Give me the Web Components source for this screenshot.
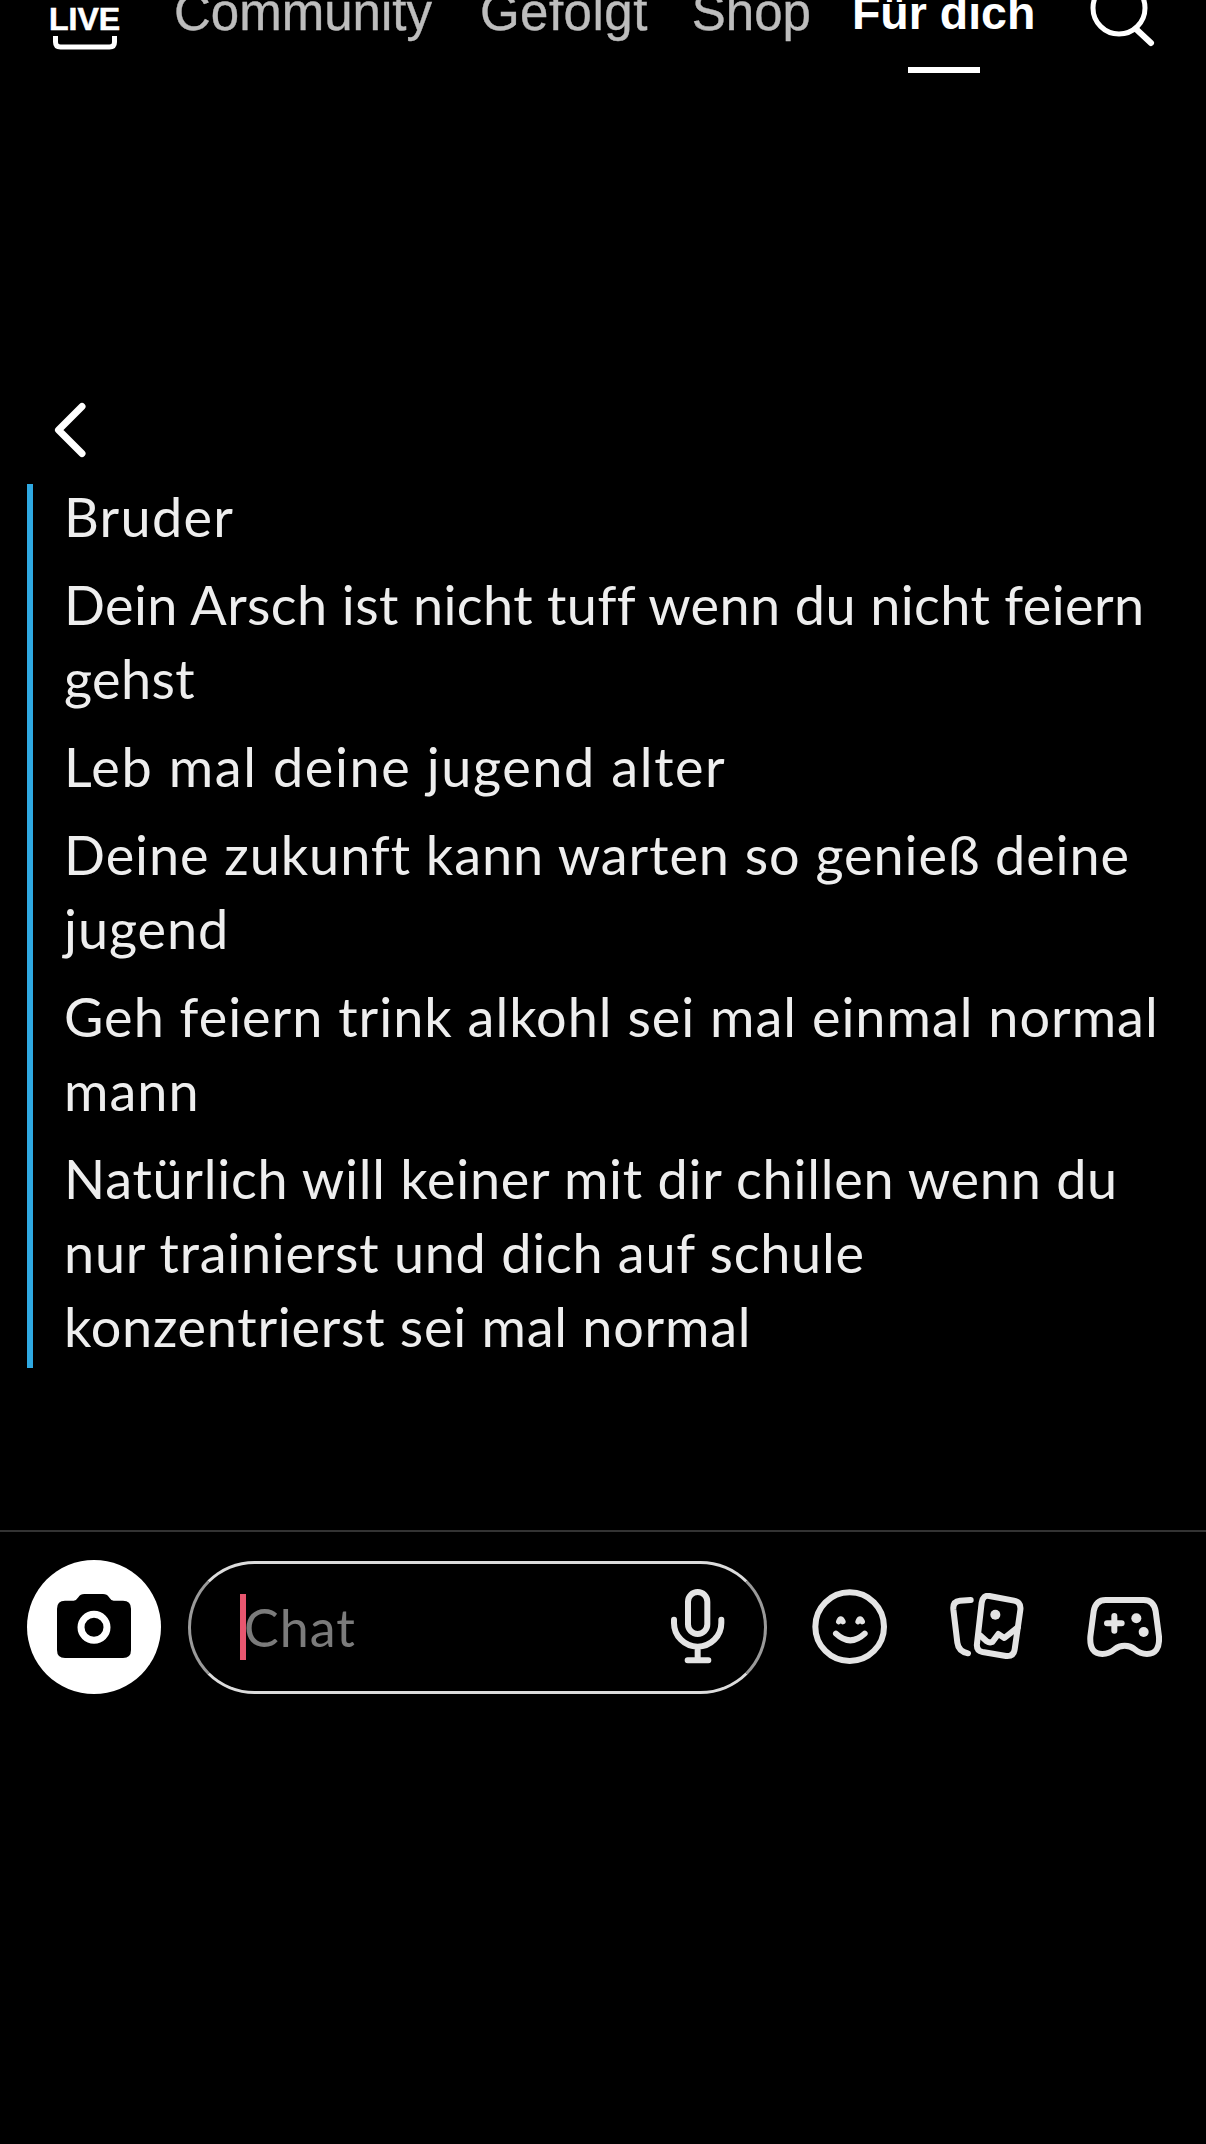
<!DOCTYPE html>
<html lang="de"><head><meta charset="utf-8"><title>Chat</title>
<style>
html,body{margin:0;padding:0;background:#000;height:2144px;overflow:hidden}
body{display:flex;flex-direction:column;font-family:"Liberation Sans",sans-serif;color:#fff}
</style></head><body>
<top-nav></top-nav>
<back-link></back-link>
<quote-block>
<p style="letter-spacing:1.300px">Bruder</p>
<p style="letter-spacing:.400px">Dein Arsch ist nicht tuff wenn du nicht feiern gehst</p>
<p>Leb mal deine jugend alter</p>
<p style="letter-spacing:.950px">Deine zukunft kann warten so genieß deine jugend</p>
<p style="letter-spacing:1px">Geh feiern trink alkohl sei mal einmal normal mann</p>
<p style="letter-spacing:.750px">Natürlich will keiner mit dir chillen wenn du nur trainierst und dich auf schule konzentrierst sei mal normal</p>
</quote-block>
<chat-composer></chat-composer>
<script>
function def(name,html){customElements.define(name,class extends HTMLElement{constructor(){super();this.attachShadow({mode:"open"}).innerHTML=html}})}
customElements.define("nav-tab",class extends HTMLElement{constructor(){super();this.attachShadow({mode:"open"}).innerHTML=`<style>
:host{display:flex;flex-direction:column;align-items:center;font:400 51px/58px "Liberation Sans",sans-serif;color:#bdbdbd;white-space:nowrap;flex:none;-webkit-text-stroke:.4px #bdbdbd}
:host([active]){font-weight:700;font-size:46.500px;color:#fff;-webkit-text-stroke:0}
i{display:none;width:72px;height:6px;background:#fff;margin-top:25px}
:host([active]) i{display:block}
</style><slot></slot><i></i>`}});
def("top-nav",`<style>
:host{display:flex;align-items:flex-start;margin-top:-16px;padding-left:49px;height:89px;flex:none}
.live{width:71px;margin-right:54px;display:flex;flex-direction:column;align-items:center;flex:none}
.live b{font:700 32px/31px "Liberation Sans",sans-serif;color:#fff;margin-top:20px;white-space:nowrap;-webkit-text-stroke:.6px #fff}
.live svg{display:block;margin-top:1px;flex:none}
nav-tab.c{margin-right:48px}nav-tab.g{margin-right:44px;letter-spacing:.5px}nav-tab.s{margin-right:41px}nav-tab.f{margin-right:55px}
.search{display:block;flex:none}
</style>
<div class="live"><b>LIVE</b><svg width="64" height="14" viewBox="0 0 64 14"><path d="M2.500 0v6q0 5 5 5h49q5 0 5-5V0" fill="none" stroke="#fff" stroke-width="5"/></svg></div>
<nav-tab class="c">Community</nav-tab><nav-tab class="g">Gefolgt</nav-tab><nav-tab class="s">Shop</nav-tab><nav-tab class="f" active>Für dich</nav-tab>
<svg class="search" width="66" height="64" viewBox="0 0 66 64"><circle cx="29" cy="24" r="26" fill="none" stroke="#fff" stroke-width="5"/><path d="M46 45l15 14" stroke="#fff" stroke-width="6" stroke-linecap="round" fill="none"/></svg>`);
def("back-link",`<style>:host{display:block;margin:326px 0 0 50px;height:85px;flex:none}svg{display:block}</style>
<svg width="40" height="62" viewBox="0 0 40 62"><path d="M32 7.500L8.500 31 32 54.500" fill="none" stroke="#fff" stroke-width="7" stroke-linecap="round" stroke-linejoin="round"/></svg>`);
def("quote-block",`<style>
:host{display:block;flex:none;margin:0 0 0 27px;width:1150px;box-sizing:border-box;padding:0 0 0 31px;border-left:6px solid #2fa9e2;font:400 54px/74px Lato,sans-serif;letter-spacing:1.600px;color:#eee;height:884px}
::slotted(p){margin:0 0 14px}
::slotted(p:first-child){margin-top:-4px}
</style><slot></slot>`);
def("chat-composer",`<style>
:host{display:flex;flex-direction:column;flex:none;margin-top:162px}
.rule{height:2px;background:#333}
.row{display:flex;align-items:center;padding:28px 0 0 27px}
.cam{width:134px;height:134px;border-radius:50%;background:#fff;display:flex;align-items:center;justify-content:center;flex:none}
.cam svg{margin-bottom:3px}
.field{width:579px;height:133px;box-sizing:border-box;margin-left:27px;border-radius:67px;border:3px solid;border-color:#dcdcdc #9a9a9a;display:flex;align-items:center;padding:0 37px 0 49px;flex:none}
.caret{width:6px;height:66px;background:#e8566f;flex:none}
.ph{font:400 52px/66px Lato,sans-serif;letter-spacing:1px;color:#7b7b7b;flex:1;margin-left:-2px}
svg{display:block;flex:none}
.a{margin-left:44.700px}.b{margin-left:63px}.c{margin-left:61.700px}
</style>
<div class="rule"></div>
<div class="row">
<div class="cam"><svg width="74" height="64" viewBox="170 248 222 192"><path fill="#000" d="M194 268h26q8 0 14-10 6-10 18-10h56q12 0 18 10 6 10 14 10h28q24 0 24 24v124q0 24-24 24H194q-24 0-24-24V292q0-24 24-24z"/><circle cx="281" cy="348" r="39" fill="none" stroke="#fff" stroke-width="21"/></svg></div>
<div class="field"><span class="caret"></span><span class="ph">Chat</span>
<svg width="56.670" height="78.330" viewBox="150 110 170 235" fill="none" stroke="#e4e4e4" stroke-width="18" stroke-linecap="round"><rect x="204" y="122" width="58" height="126" rx="29"/><path d="M162 205v10a71 71 0 0 0 142 0v-10M233 288v38M203 327h62"/></svg></div>
<svg class="a" width="75.330" height="75.330" viewBox="575 112 226 226" fill="none" stroke="#e4e4e4" stroke-width="18" stroke-linecap="round"><circle cx="688" cy="225" r="103"/><path d="M647 246q43 40 86 0"/><path d="M655 210q6-16 13 0M713 210q6-16 13 0" stroke-width="16"/></svg>
<svg class="b" width="75" height="68.330" viewBox="150 125 225 205" fill="none" stroke="#e4e4e4" stroke-width="18" stroke-linecap="round" stroke-linejoin="round"><path d="M212 146l-32 2q-22 2-20 26l12 100q3 26 32 32"/><path d="M268 134l74 14q22 4 19 28l-17 118q-3 22-26 20l-70-12q-20-4-17-26l14-122q4-24 23-20z"/><path d="M240 252l20 18q8 5 17 2l18-24 18 12 40-32"/><circle cx="286" cy="190" r="15" fill="#e4e4e4" stroke="none"/></svg>
<svg class="c" width="75" height="63.330" viewBox="560 130 225 190" fill="none" stroke="#e4e4e4" stroke-width="18" stroke-linecap="round" stroke-linejoin="round"><path d="M616 145h114q30 0 36 34l10 76q3 52-36 52-20 0-38-15-11-10-29-10t-29 10q-18 15-38 15-39 0-36-52l10-76q6-34 36-34z"/><path d="M620 215h44M642 193v44"/><circle cx="708" cy="200" r="15" fill="#e4e4e4" stroke="none"/><circle cx="730" cy="241" r="15" fill="#e4e4e4" stroke="none"/></svg>
</div>`);
</script>
</body></html>
